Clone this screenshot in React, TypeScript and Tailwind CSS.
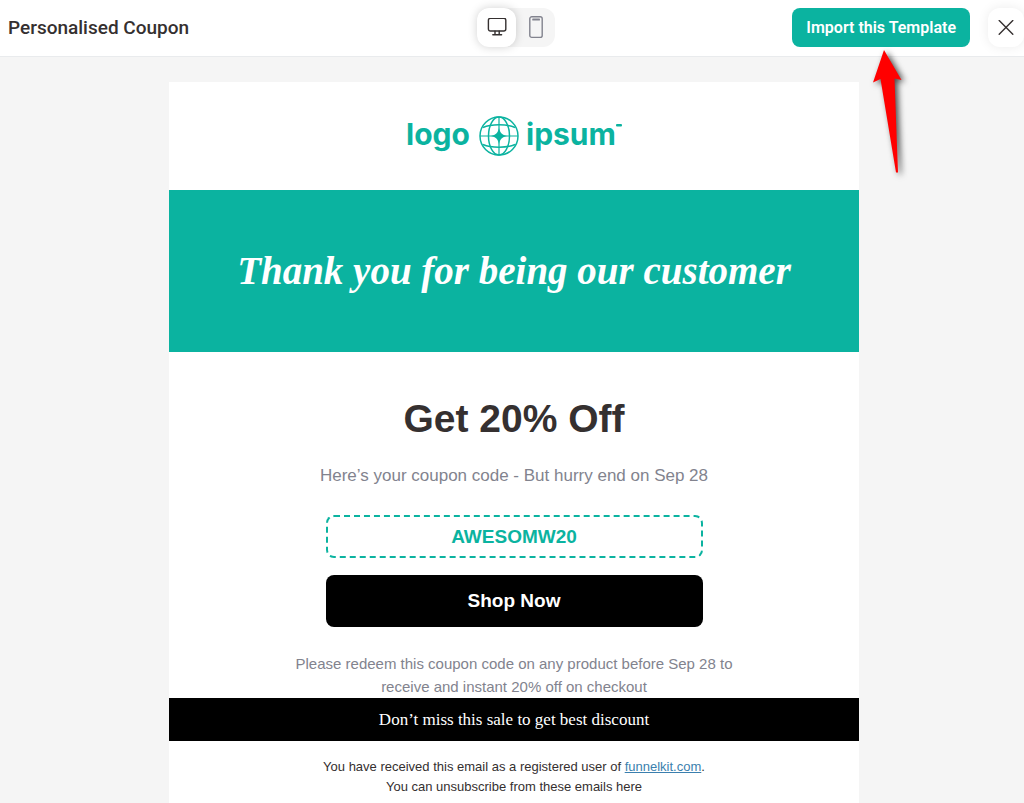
import { useState } from 'react'
import { clsx } from 'clsx'

function DesktopIcon() {
  return (
    <svg width="20" height="20" viewBox="0 0 20 20" fill="none" stroke="#353030" strokeWidth="1.4" strokeLinecap="round" strokeLinejoin="round">
      <rect x="1.4" y="0.2" width="17.4" height="12.8" rx="2" />
      <path d="M8 13.2v3.2M12.2 13.2v3.2M5.8 16.7h8.8" />
    </svg>
  )
}

function MobileIcon() {
  return (
    <svg width="14" height="24" viewBox="0 0 14 24" fill="none" stroke="#82838e" strokeWidth="1.4" strokeLinecap="round" strokeLinejoin="round">
      <rect x="0.8" y="0.8" width="12.4" height="20.6" rx="2" />
      <path d="M3.8 3v1h6.6v-1z" strokeWidth="1.1" />
    </svg>
  )
}

function CloseIcon() {
  return (
    <svg width="16" height="16" viewBox="0 0 16 16" fill="none" stroke="#353030" strokeWidth="1.4" strokeLinecap="round">
      <path d="M1.2 0.6l13.6 13.6M14.8 0.6L1.2 14.2" />
    </svg>
  )
}

function Logo() {
  return (
    <svg width="216" height="44" viewBox="0 0 216 44" fill="#0bb3a0" role="img" aria-label="logo ipsum">
      <text x="0" y="31" className="font-['Inter',sans-serif] text-[30px] font-bold">logo</text>
      <g fill="none" stroke="#0bb3a0" strokeWidth="1.5">
        <circle cx="93" cy="22" r="19" />
        <ellipse cx="93" cy="22" rx="10.5" ry="19" />
        <path d="M93 3v38M74 22h38" strokeWidth="1.2" />
        <path d="M77 13.5c8-3.600 24-3.600 32 0M77 30.500c8 3.600 24 3.600 32 0" />
      </g>
      <path d="M93 14c1.300 5 3 6.700 8 8c-5 1.300-6.700 3-8 8c-1.300-5-3-6.700-8-8c5-1.300 6.700-3 8-8z" />
      <text x="120" y="31" className="font-['Inter',sans-serif] text-[30px] font-bold">ipsum</text>
      <rect x="210" y="10" width="6" height="2.500" rx="1" />
    </svg>
  )
}

function Arrow() {
  return (
    <svg
      width="40"
      height="130"
      viewBox="0 0 40 130"
      className="pointer-events-none absolute top-full right-[113px] z-10 drop-shadow-[3px_2px_3px_rgba(0,0,0,0.7)]"
      aria-hidden="true"
    >
      <path d="M13 3L30.5 33L23.5 31.5L27 125.5H25L9.5 32L2 35.5z" fill="#ff0000" />
    </svg>
  )
}

export default function App() {
  const [device, setDevice] = useState<'desktop' | 'mobile'>('desktop')

  return (
    <div className="min-h-screen bg-[#f5f5f5] font-['Liberation_Sans',Arial,sans-serif]">
      {/* Top bar */}
      <header className="grid grid-cols-[1fr_auto_1fr] items-center border-b border-[#e9ebed] bg-white pt-2 pb-[9px] pl-2 font-['Roboto',sans-serif]">
        <h1 className="text-[19px] leading-6 font-medium text-[#353030]">Personalised Coupon</h1>

        <div className="flex rounded-xl bg-[#f5f5f5]">
          <button
            type="button"
            aria-label="Desktop"
            onClick={() => setDevice('desktop')}
            className={clsx('flex h-[39px] w-[39px] items-center justify-center rounded-xl', device === 'desktop' && 'bg-white shadow-[0_0_10px_rgba(0,0,0,0.18)]')}
          >
            <DesktopIcon />
          </button>
          <button
            type="button"
            aria-label="Mobile"
            onClick={() => setDevice('mobile')}
            className={clsx('flex h-[39px] w-[39px] items-center justify-center rounded-xl', device === 'mobile' && 'bg-white shadow-[0_0_10px_rgba(0,0,0,0.18)]')}
          >
            <MobileIcon />
          </button>
        </div>

        <div className="flex justify-end gap-[18px]">
          <button type="button" className="h-[39px] rounded-lg bg-[#0bb3a0] px-3.5 text-base font-semibold text-white">
            Import this Template
          </button>
          <button
            type="button"
            aria-label="Close"
            className="flex h-[39px] w-9 items-center justify-center rounded-xl bg-white shadow-[0_0_12px_rgba(0,0,0,0.08)]"
          >
            <CloseIcon />
          </button>
        </div>
      </header>

      {/* Pointer to the import button */}
      <div className="relative">
        <div className="absolute inset-x-0 top-0 -mt-2.5">
          <Arrow />
        </div>
      </div>

      {/* Email preview */}
      <main className="pt-[25px] pl-1">
        <article className={clsx('mx-auto bg-white text-center', device === 'desktop' ? 'max-w-[690px]' : 'max-w-[375px]')}>
          <div className="flex justify-center py-8">
            <Logo />
          </div>

          <div className="bg-[#0bb3a0] px-6 py-14">
            <h2 className="font-['Liberation_Serif',serif] text-[39px] leading-[50px] font-bold text-white italic">
              Thank you for being our customer
            </h2>
          </div>

          <div className="px-10 pt-10">
            <h3 className="text-[39px] leading-[54px] font-bold text-[#353030]">Get 20% Off</h3>
            <p className="mt-[18px] text-[17px] leading-6 text-[#82838e]">Here’s your coupon code - But hurry end on Sep 28</p>
            <div className="mx-auto mt-[27px] max-w-[377px] rounded-lg border-2 border-dashed border-[#0bb3a0] text-[19px] leading-[39px] font-bold text-[#0bb3a0]">
              AWESOMW20
            </div>
            <a href="#shop" className="mx-auto mt-[17px] block max-w-[377px] rounded-lg bg-black text-[19px] leading-[52px] font-bold text-white">
              Shop Now
            </a>
            <p className="mx-auto mt-[25px] max-w-[460px] text-[15px] leading-[23px] text-[#82838e]">
              Please redeem this coupon code on any product before Sep 28 to receive and instant 20% off on checkout
            </p>
          </div>

          <p className="bg-black font-['Liberation_Serif',serif] text-[17px] leading-[43px] text-white">
            Don’t miss this sale to get best discount
          </p>

          <footer className="px-10 pt-4 pb-6 text-[13px] leading-5 text-[#353030]">
            <p>
              You have received this email as a registered user of{' '}
              <a href="#funnelkit" className="text-[#3b7fae] underline">
                funnelkit.com
              </a>
              .
            </p>
            <p>You can unsubscribe from these emails here</p>
          </footer>
        </article>
      </main>
    </div>
  )
}
